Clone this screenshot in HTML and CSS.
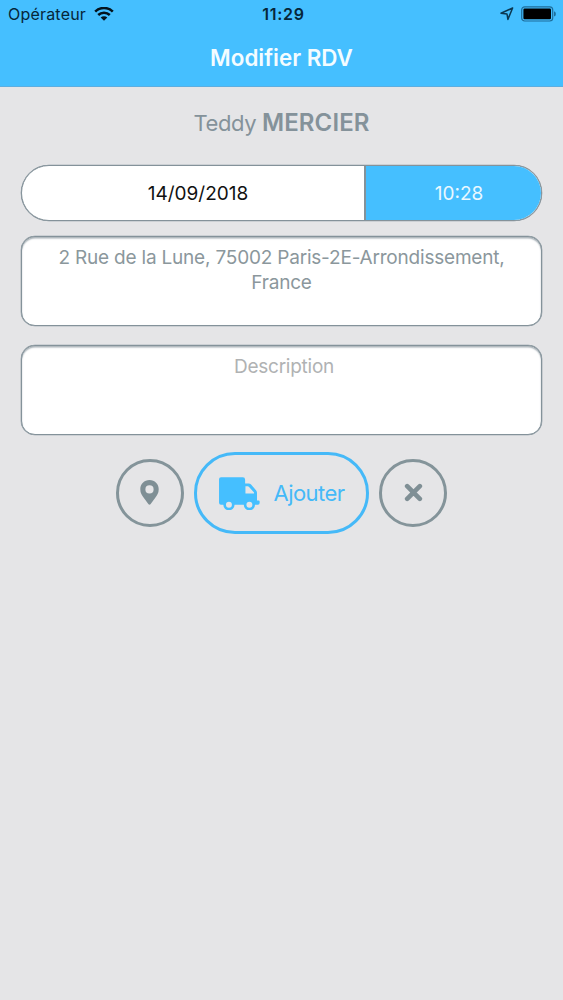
FILE: index.html
```html
<!DOCTYPE html>
<html lang="fr">
<head>
<meta charset="utf-8">
<title>Modifier RDV</title>
<link rel="stylesheet" href="styles.css">
</head>
<body>
<header class="header">
  <div class="status">
    <div class="status-left">
      <span class="carrier">Opérateur</span>
      <svg class="wifi" viewBox="0 0 20 14"><path d="M1.2 4.6a12.6 12.6 0 0 1 17.6 0" stroke-width="2.6"/><path d="M4.2 8a8.3 8.3 0 0 1 11.6 0" stroke-width="2.5"/><path class="wifi-dot" d="M6.7 10.5a4.7 4.7 0 0 1 6.6 0L10 13.8z"/></svg>
    </div>
    <span class="clock">11:29</span>
    <div class="status-right">
      <svg class="arrow" viewBox="0 0 14 14"><path d="M12.6 1L1 6.2l6 .8.9 5.4z"/></svg>
      <svg class="battery" viewBox="0 0 36 16"><rect class="battery-case" x=".7" y=".8" width="31" height="14.2" rx="3"/><rect x="2.4" y="2.5" width="27.6" height="10.8" rx="1.2"/><path class="battery-tip" d="M33 5.3q1.9.6 1.9 2.6T33 10.5z"/></svg>
    </div>
  </div>
  <h1 class="title">Modifier RDV</h1>
</header>
<main class="content">
  <h2 class="client">Teddy <strong>MERCIER</strong></h2>
  <div class="schedule">
    <div class="date"><span>14/09/2018</span></div>
    <div class="time"><span>10:28</span></div>
  </div>
  <div class="field address"><span>2 Rue de la Lune, 75002 Paris-2E-Arrondissement,</span><br><span class="country">France</span></div>
  <div class="field description"><span>Description</span></div>
  <div class="actions">
    <button class="round" aria-label="Position">
      <svg class="pin" viewBox="0 0 56 76"><path fill-rule="evenodd" d="M28 0C12 0 0 12 0 28c0 12 5 18 11 27l14 19q3 3 6 0l14-19c6-9 11-15 11-27C56 12 44 0 28 0zm0 16a12.5 12.5 0 1 1 0 25 12.5 12.5 0 0 1 0-25z"/></svg>
    </button>
    <button class="add">
      <svg class="truck" viewBox="0 0 124 100"><path fill-rule="evenodd" d="M6 1h66q7 0 7 7v12h11q4 0 7 3l15 17q3 4 3 8v23h5q3 0 3 3v5q0 5-5 5h-9a17 17 0 0 1-34 0H47a17 17 0 0 1-34 0H6q-6 0-6-6V7q0-6 6-6zm74 27v22h26v-3L91 30q-2-2-4-2zM30 75a9 9 0 1 0 0 18 9 9 0 0 0 0-18zm62 0a9 9 0 1 0 0 18 9 9 0 0 0 0-18z"/></svg>
      <span>Ajouter</span>
    </button>
    <button class="round" aria-label="Fermer">
      <svg class="cross" viewBox="0 0 18 18"><path d="M3 3l12 12M15 3L3 15"/></svg>
    </button>
  </div>
</main>
</body>
</html>
```
FILE: styles.css
```css
* { box-sizing: border-box; }
body {
  margin: 0;
  min-height: 1000px;
  background: #e5e5e7;
  font-family: Inter, "Liberation Sans", sans-serif;
}
svg { display: block; flex: none; }
.header {
  height: 87px;
  background: #45bfff;
  border-bottom: 1px solid #5daee0;
}
.status {
  display: grid;
  grid-template-columns: 1fr auto 1fr;
  align-items: center;
  height: 28px;
  padding: 0 7px 0 8px;
  color: #06263a;
}
.status-left, .status-right { display: flex; align-items: center; }
.status-right { justify-content: flex-end; gap: 7px; }
.carrier { font-size: 16px; letter-spacing: 0.2px; }
.wifi { width: 20px; height: 14px; margin-left: 8px; fill: none; stroke: #04131d; }
.wifi .wifi-dot { fill: #04131d; stroke: none; }
.clock { padding-left: 3px; font-size: 16px; font-weight: 600; letter-spacing: 0.7px; }
.arrow { width: 14px; height: 14px; fill: none; stroke: #0b3852; stroke-width: 1.5; stroke-linejoin: round; }
.battery { width: 36px; height: 16px; margin-right: -1px; }
.battery-case { fill: none; stroke: #1e6d9b; stroke-width: 1.2; }
.battery-tip { fill: #1e6d9b; }
.title {
  margin: 0;
  padding-top: 2px;
  text-align: center;
  font-size: 22.4px;
  font-weight: 600;
  line-height: 56px;
  color: #f4fcff;
}
.content { padding: 19px 21px 0; }
.client {
  margin: 0 0 25px;
  height: 34px;
  line-height: 34px;
  text-align: center;
  font-size: 22px;
  font-weight: 400;
  letter-spacing: -0.4px;
  color: #84929a;
}
.client strong { font-size: 24px; font-weight: 600; letter-spacing: 0.1px; }
.schedule {
  display: flex;
  height: 56px;
  border: 1px solid #84929a;
  border-radius: 28px;
  overflow: hidden;
  background: #fff;
  box-shadow: 0 0 0 0.3px #84929a;
  font-size: 19px;
}
.date, .time { display: flex; align-items: center; justify-content: center; }
.date { flex: 1; padding-left: 10px; color: #111; }
.time {
  width: 177px;
  padding-left: 11px;
  border-left: 2px solid #84929a;
  background: #45bfff;
  color: #e9f8ff;
}
.field {
  height: 90px;
  margin-top: 15px;
  padding: 9px 20px;
  border: 1px solid #84929a;
  border-radius: 14px;
  background: #fff;
  box-shadow: 0 0 0 0.3px #84929a, inset 0 1.5px 1.5px #a9b2b8;
  text-align: center;
  font-size: 19px;
  letter-spacing: -0.2px;
  line-height: 24.5px;
  color: #8b979c;
}
.field.description { margin-top: 19px; padding-left: 25px; letter-spacing: -0.25px; color: #b0b2b3; }
.actions {
  display: flex;
  justify-content: center;
  align-items: center;
  gap: 10px;
  margin-top: 17px;
}
.round, .add {
  display: flex;
  align-items: center;
  justify-content: center;
  padding: 0;
  background: none;
  font-family: inherit;
}
.round { width: 68px; height: 68px; border: 3px solid #84949a; border-radius: 50%; }
.add {
  width: 175px;
  height: 82px;
  gap: 14px;
  border: 3px solid #45b9f8;
  border-radius: 41px;
  font-size: 22px;
  letter-spacing: -0.55px;
  color: #45b9f8;
}
.pin { width: 19px; height: 25px; fill: #7f8f95; margin: -2px 1px 0 0; }
.truck { width: 41px; height: 33px; fill: #45bfff; }
.cross { width: 19px; height: 19px; stroke: #7f8f95; stroke-width: 4.4; stroke-linecap: round; margin-top: -2px; }
```
